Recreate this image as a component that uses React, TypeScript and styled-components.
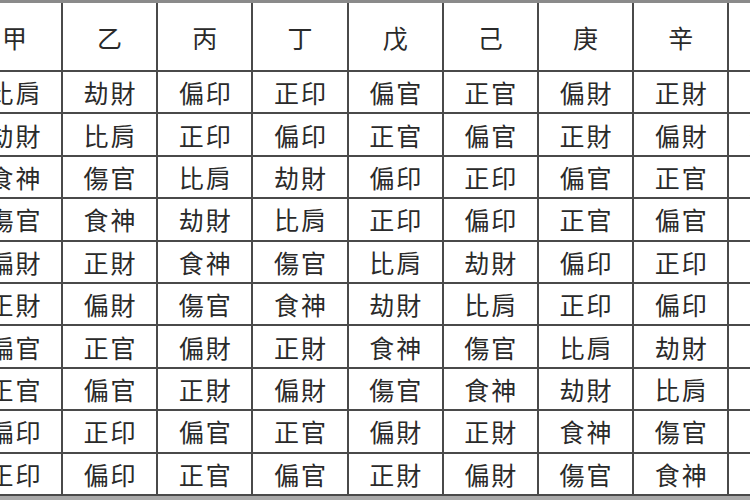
import React from "react";
import styled, { createGlobalStyle } from "styled-components";

const Global = createGlobalStyle`
  html, body { margin: 0; padding: 0; background: #ffffff; }
  #root { width: 750px; height: 500px; }
`;

const Page = styled.div`
  width: 750px;
  height: 500px;
  overflow: hidden;
  background: #a9a9a9;
  border-top: 3px solid #8a8a8a;
  box-sizing: border-box;
`;

const Grid = styled.div`
  display: grid;
  grid-template-columns: repeat(9, 93.2px);
  grid-template-rows: 67px repeat(10, 40.4px);
  column-gap: 2px;
  row-gap: 2px;
  width: max-content;
  margin-left: -32.2px;
  background: #4a4a4a;
  padding-bottom: 2px;
`;

const Cell = styled.div<{ $head?: boolean }>`
  background: #ffffff;
  display: flex;
  align-items: center;
  justify-content: center;
  font-family: "Noto Sans CJK TC", "Noto Sans CJK SC", serif;
  font-size: ${(p) => (p.$head ? "25px" : "25px")};
  font-weight: 400;
  color: #2a2a2a;
  letter-spacing: 2px;
  text-indent: 2px;
  white-space: nowrap;
`;

const stems = ["甲", "乙", "丙", "丁", "戊", "己", "庚", "辛", "壬"];

const rows: string[][] = [
  ["比肩", "劫財", "偏印", "正印", "偏官", "正官", "偏財", "正財", "食神"],
  ["劫財", "比肩", "正印", "偏印", "正官", "偏官", "正財", "偏財", "傷官"],
  ["食神", "傷官", "比肩", "劫財", "偏印", "正印", "偏官", "正官", "偏財"],
  ["傷官", "食神", "劫財", "比肩", "正印", "偏印", "正官", "偏官", "正財"],
  ["偏財", "正財", "食神", "傷官", "比肩", "劫財", "偏印", "正印", "偏官"],
  ["正財", "偏財", "傷官", "食神", "劫財", "比肩", "正印", "偏印", "正官"],
  ["偏官", "正官", "偏財", "正財", "食神", "傷官", "比肩", "劫財", "偏印"],
  ["正官", "偏官", "正財", "偏財", "傷官", "食神", "劫財", "比肩", "正印"],
  ["偏印", "正印", "偏官", "正官", "偏財", "正財", "食神", "傷官", "比肩"],
  ["正印", "偏印", "正官", "偏官", "正財", "偏財", "傷官", "食神", "劫財"],
];

export default function App() {
  return (
    <>
      <Global />
      <Page>
        <Grid>
          {stems.map((s) => (
            <Cell key={s} $head>
              {s}
            </Cell>
          ))}
          {rows.map((r, i) =>
            r.map((t, j) => <Cell key={`${i}-${j}`}>{t}</Cell>)
          )}
        </Grid>
      </Page>
    </>
  );
}
